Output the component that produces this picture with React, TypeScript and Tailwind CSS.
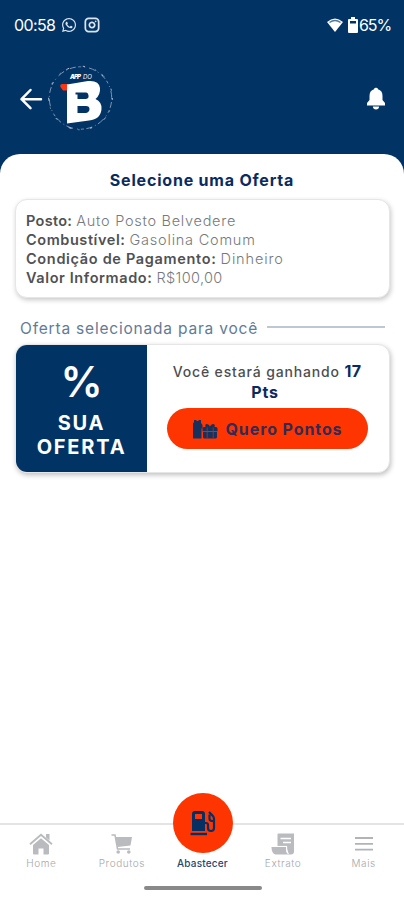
import React from "react";
import { FaWhatsapp } from "react-icons/fa";
import { Instagram } from "lucide-react";

const info = [
  { label: "Posto:", value: "Auto Posto Belvedere", labelClass: "tracking-[0.3px]", valueClass: "tracking-[0.73px]" },
  { label: "Combustível:", value: "Gasolina Comum", labelClass: "tracking-[0.57px]", valueClass: "tracking-[0.78px]" },
  { label: "Condição de Pagamento:", value: "Dinheiro", labelClass: "tracking-[0.67px]", valueClass: "tracking-[0.85px]" },
  { label: "Valor Informado:", value: "R$100,00", labelClass: "tracking-[0.6px]", valueClass: "tracking-[0.35px]" },
];

const HomeIcon = () => (
  <svg width="24" height="22" viewBox="0 0 24 22" fill="#b9bbbe">
    <path d="M12 5.2 20 12V20.5Q20 21.5 19 21.5H14.5V15.5H9.5V21.5H5Q4 21.5 4 20.5V12Z" />
    <path d="M1 11.3 12 1.8 23 11.3" fill="none" stroke="#b9bbbe" strokeWidth="1.8" />
    <path d="M17 1H20.5V7.5L17 4.5Z" />
  </svg>
);

const CartIcon = () => (
  <svg width="22" height="22" viewBox="0 0 22 22" fill="#b9bbbe">
    <path d="M4.5 4H21L19.5 12.5L6.5 14Z" />
    <path d="M0.5 2H4L6.5 16H19" fill="none" stroke="#b9bbbe" strokeWidth="1.5" />
    <circle cx="7.2" cy="19" r="1.8" />
    <circle cx="17.8" cy="19" r="1.8" />
  </svg>
);

const ExtratoIcon = () => (
  <svg width="24" height="22" viewBox="0 0 24 22" fill="#b9bbbe">
    <path d="M6.5 1.5Q6.5 0.5 7.5 0.5H23V18.5Q23 21.5 20 21.5H17.5L16 15.5V13H6.5Z" />
    <path d="M0.5 14H15V17Q15 20 18 21.5H4.5Q0.5 20.5 0.5 14Z" />
    <path d="M9.5 5.5H20M12 9.5H20" stroke="white" strokeWidth="1.5" />
    <path d="M0 13.4H15.7V17L17.5 21" fill="none" stroke="white" strokeWidth="0.8" />
  </svg>
);

const MenuIcon = () => (
  <svg width="20" height="22" viewBox="0 0 20 22" stroke="#b1b3b6" strokeWidth="1.8">
    <path d="M1 5H19M1 10.8H19M1 16.6H19" />
  </svg>
);

const PumpIcon = () => (
  <svg width="28" height="28" viewBox="0 0 28 28" fill="none">
    <path
      fillRule="evenodd"
      d="M3 22V5Q3 2 6 2H13Q16 2 16 5V22ZM6 5V10H13V5Z"
      fill="#062f62"
    />
    <path d="M1.5 25H18" stroke="#062f62" strokeWidth="2.4" />
    <path
      d="M16 14H17Q19 14 19 16V19Q19 22 22 22Q25 22 25 19V10Q25 8 23.5 6.5L20 3M20.5 5.5V10Q20.5 12 24 12"
      stroke="#062f62"
      strokeWidth="2.2"
    />
  </svg>
);

const GiftIcon = () => (
  <svg width="26" height="20" viewBox="0 0 26 20" fill="#17315d">
    <path d="M1 19.5V4.5L2 3V1H4.5V2H6.5V1H9V4L10.5 6V9.5H9.5V19.5Z" />
    <path d="M10.5 12V9.5Q10.5 8 12 8H13.5Q12.5 5 15 5Q17 5 18 7.5Q19 5 21 5Q23.5 5 22.5 8H24Q25.5 8 25.5 9.5V12Z" />
    <path d="M11 13H25V18Q25 19.5 23.5 19.5H12.5Q11 19.5 11 18Z" />
    <path d="M15.2 8.5V19.5M21.2 8.5V19.5M10.5 12.5H25.5" stroke="#a83228" strokeWidth="0.8" />
  </svg>
);

const Logo = () => (
  <svg width="66" height="68" viewBox="0 0 66 68" className="overflow-visible">
    <circle cx="32.5" cy="33" r="31.2" fill="none" stroke="#7e96b2" strokeWidth="1" strokeDasharray="1 3 6 2.5 3 3 1 4 7 2.5" />
    <circle cx="32.5" cy="33" r="31.8" fill="none" stroke="#c8d3df" strokeWidth="0.9" strokeDasharray="2 11 1 7 3 14" />
    <text x="22" y="13.5" fontFamily="Inter, sans-serif" fontSize="6" fontStyle="italic" fontWeight="900" fill="white" textLength="11">APP</text>
    <text x="35" y="13.5" fontFamily="Inter, sans-serif" fontSize="6" fontStyle="italic" fontWeight="400" fill="white">DO</text>
    <path d="M20 19H14Q11.5 19.5 12.5 22L15 25.5H20Z" fill="#ff3510" />
    <path
      fillRule="evenodd"
      d="M19 19.5 40 16Q51 15 52 23Q52.5 30 47.5 34Q54 37 53.5 44Q53 54 41 55.5L19 58.5ZM27.5 27.5V29.5H29.5V34H38Q41 33.5 40.5 30.5Q40 27.5 38 27.5ZM29.5 41V48H38Q41.5 47 41.5 44Q41.5 41 38 41Z"
      fill="white"
    />
  </svg>
);

const tabs = [
  { label: "Home", icon: <HomeIcon /> },
  { label: "Produtos", icon: <CartIcon /> },
  { label: "Abastecer", active: true },
  { label: "Extrato", icon: <ExtratoIcon /> },
  { label: "Mais", icon: <MenuIcon /> },
];

const App: React.FC = () => {
  return (
    <div className="flex h-[900px] w-[404px] flex-col overflow-hidden bg-[#013365] font-['Inter',sans-serif]">
      {/* Status bar */}
      <div className="flex h-[50px] shrink-0 items-center justify-between pl-[14px] pr-[14px] text-white">
        <div className="flex items-center">
          <span className="w-[47px] text-[16px] tracking-[-0.6px]">00:58</span>
          <FaWhatsapp size={16} className="text-[#dce5ee]" />
          <Instagram size={16} strokeWidth={2.6} className="ml-[7px] text-[#dce5ee]" />
        </div>
        <div className="flex items-center">
          <svg width="18" height="16" viewBox="0 0 18 16">
            <path d="M1 5Q9-2 17 5L9 15Z" fill="white" />
            <path d="M3.5 5.5Q9 1.5 14.5 5.5" stroke="#547594" strokeWidth="1.5" fill="none" />
          </svg>
          <svg width="10" height="16" viewBox="0 0 10 16" className="ml-[4px]">
            <path fillRule="evenodd" d="M3 0H7V2H9Q10 2 10 3V15Q10 16 9 16H1Q0 16 0 15V3Q0 2 1 2H3ZM2 4V6.5H8V4Z" fill="white" />
          </svg>
          <span className="ml-[1px] w-[31px] whitespace-nowrap text-[16px] tracking-[-1.1px]">65%</span>
        </div>
      </div>

      {/* Header */}
      <header className="flex h-[104px] shrink-0 items-center justify-between pb-[7px] pl-[19px] pr-[18px]">
        <div className="flex items-center">
          <svg width="24" height="22" viewBox="0 0 24 22" fill="none" stroke="white" strokeWidth="2.5" strokeLinecap="round" strokeLinejoin="round">
            <path d="M22 11.2H2.5M11.5 2 2.5 11.2 11.5 20.2" />
          </svg>
          <span className="ml-[5px]">
            <Logo />
          </span>
        </div>
        <svg width="20" height="24" viewBox="0 0 20 24" fill="white">
          <path d="M1 17.5V16L3.5 13V9Q3.5 3.5 8 2.2Q8.2 0.8 10 0.8Q11.8 0.8 12 2.2Q16.5 3.5 16.5 9V13L19 16V18.5H1Z" />
          <path d="M6.8 19.5H13.2Q12.8 22.5 10 22.5Q7.2 22.5 6.8 19.5Z" />
        </svg>
      </header>

      <main className="flex grow flex-col rounded-t-[20px] bg-white">
        <h1 className="mt-[16px] text-center text-[16px] leading-[20px] font-bold tracking-[0.8px] text-[#0b2b60]">
          Selecione uma Oferta
        </h1>

        {/* Resumo do abastecimento */}
        <section className="mr-[14px] ml-[15px] mt-[9px] h-[99px] rounded-xl border border-[#e5e6e7] bg-white px-[10px] pt-[10.5px] shadow-[1px_2px_5px_rgba(0,0,0,0.22)]">
          {info.map((item) => (
            <p key={item.label} className="h-[19.2px] whitespace-nowrap text-[14.5px] leading-[19.2px]">
              <span className={`font-semibold text-[#505153] ${item.labelClass}`}>{item.label}</span>{" "}
              <span className={`font-light text-[#77797c] ${item.valueClass}`}>{item.value}</span>
            </p>
          ))}
        </section>

        <div className="mt-[21px] mr-[19px] ml-[20px] flex h-[20px] items-center">
          <span className="w-[247px] whitespace-nowrap text-[15.5px] tracking-[0.8px] text-[#637b96]">
            Oferta selecionada para você
          </span>
          <span className="mb-[4px] h-[2px] grow bg-[#bdc8cf]" />
        </div>

        {/* Oferta */}
        <section className="mr-[14px] ml-[15px] mt-[5px] flex h-[129px] overflow-hidden rounded-xl border border-[#e5e6e7] bg-white shadow-[1px_2px_5px_rgba(0,0,0,0.25)]">
          <div className="flex w-[131px] shrink-0 flex-col items-center bg-[#013365] pt-[15px] font-bold text-white">
            <span className="text-[42px] leading-[44px] font-semibold">%</span>
            <span className="mt-[7px] text-center text-[20px] leading-[24px] tracking-[1.8px]">
              SUA
              <br />
              OFERTA
            </span>
          </div>
          <div className="flex grow flex-col items-center pt-[16px] pr-[2px]">
            <p className="text-center text-[14px] leading-[20px] font-medium tracking-[0.85px] whitespace-nowrap text-[#4d4e51]">
              Você estará ganhando <b className="text-[16px] tracking-[0.3px] text-[#0b2b60]">17</b>
              <br />
              <b className="mr-[4px] text-[16px] text-[#0b2b60]">Pts</b>
            </p>
            <button className="mt-[5px] flex h-[41px] w-[201px] items-center justify-center gap-[8px] rounded-full bg-[#ff3500] text-[16px] font-bold tracking-[0.9px] text-[#322b53]">
              <GiftIcon />
              Quero Pontos
            </button>
          </div>
        </section>

        {/* Bottom navigation */}
        <nav className="relative mt-auto h-[77px] border-t-2 border-[#e2e4e5] pl-[1px]">
          <div className="grid grid-cols-5">
            {tabs.map((tab) => (
              <div key={tab.label} className="flex flex-col items-center pt-[7px]">
                <div className="flex h-[23px] items-center justify-center">{tab.icon}</div>
                <span
                  className={`mt-[1px] text-[10px] leading-[14px] whitespace-nowrap ${
                    tab.active ? "font-medium tracking-[0.2px] text-[#28466f]" : "font-light tracking-[0.6px] text-[#a6a8ab]"
                  }`}>
                  {tab.label}
                </span>
              </div>
            ))}
          </div>
          <div className="absolute top-[-32px] left-[173px] flex h-[60px] w-[60px] items-center justify-center rounded-full bg-[#ff3500]">
            <PumpIcon />
          </div>
          <div className="mx-auto mt-[16px] h-[4px] w-[118px] rounded-full bg-[#898989]" />
        </nav>
      </main>
    </div>
  );
};

export default App;
